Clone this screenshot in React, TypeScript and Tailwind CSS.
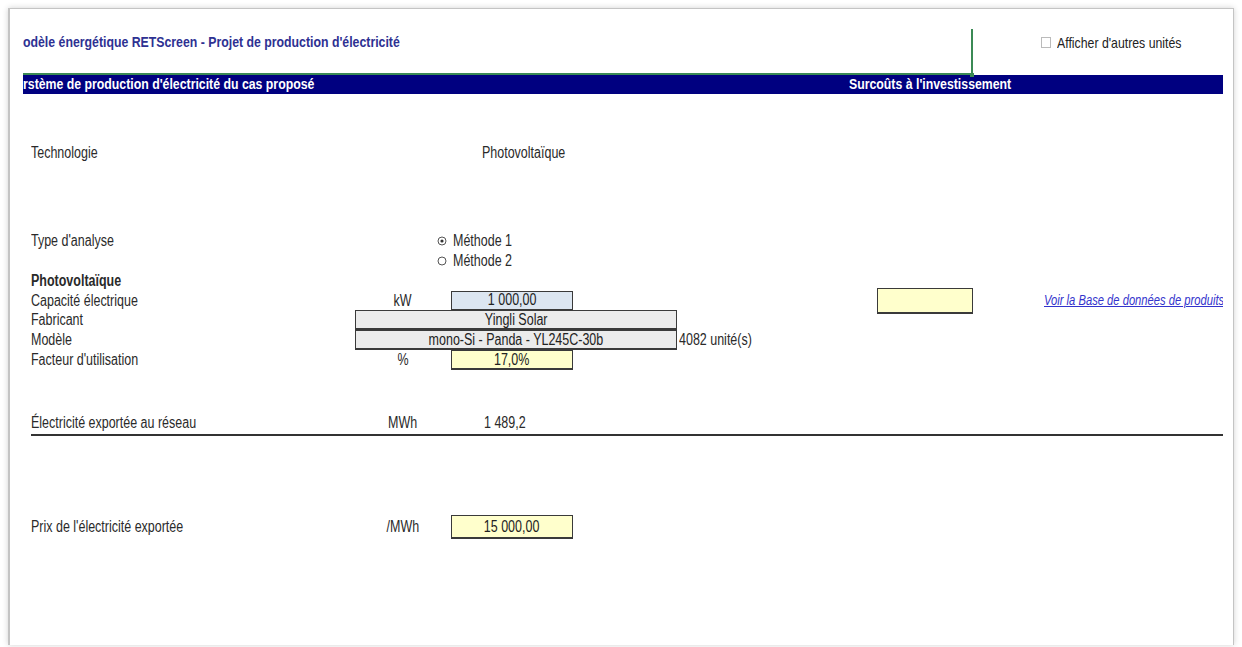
import React from 'react';

const font = { fontFamily: '"Liberation Sans", Arial, sans-serif' };

// Arial Narrow is not available: squeeze Liberation Sans horizontally
const T = ({
  children,
  className = '',
  center,
}: {
  children: React.ReactNode;
  className?: string;
  center?: boolean;
}) => (
  <span
    className={`inline-block whitespace-nowrap ${center ? 'origin-center' : 'origin-left'} ${className || 'scale-x-[0.78]'}`}
  >
    {children}
  </span>
);

const Box = ({ value, className = '' }: { value: string; className?: string }) => (
  <div
    className={`flex h-[20px] items-center justify-center border border-b-2 border-[#3a3a3a] text-[16px] text-[#222] ${className}`}
  >
    <T center>{value}</T>
  </div>
);

const Radio = ({ checked }: { checked?: boolean }) => (
  <svg width="10" height="10" viewBox="0 0 10 10" className="mr-[6px]">
    <circle cx="5" cy="5" r="4" fill="none" stroke="#555" strokeWidth="1" />
    {checked && <circle cx="5" cy="5" r="1.6" fill="#333" />}
  </svg>
);

const Unit = ({ children }: { children: React.ReactNode }) => (
  <span className="w-[96px] text-center">
    <T center>{children}</T>
  </span>
);

export default function App() {
  return (
    <div className="h-[647px] w-[1242px] overflow-hidden bg-white" style={font}>
      <div className="ml-[8px] mt-[8px] h-[637px] w-[1226px] overflow-hidden border-l-2 border-r border-t border-[#c4c4c4] bg-white shadow-[0_0_6px_rgba(0,0,0,0.18)]">
        {/* header */}
        <div className="flex h-[66px]">
          <div className="flex w-[961px] flex-col pl-[13px]">
            <div className="pt-[23px] text-[15px] font-bold leading-[20px] text-[#2e3192]">
              <T className="scale-x-[0.82]">odèle énergétique RETScreen - Projet de production d'électricité</T>
            </div>
            <div className="mt-auto h-[2px] bg-[#3b8a55]" />
          </div>
          <div className="relative mt-[20px] w-[2px] bg-[#3b8a55]">
            <div className="absolute -left-[1px] bottom-[-2px] h-[4px] w-[4px] bg-[#3b8a55]" />
          </div>
          <div className="flex items-start pl-[68px] pt-[26px]">
            <span className="mr-[6px] mt-[2px] inline-block h-[11px] w-[10px] border border-[#bbb] bg-white" />
            <span className="text-[15px] leading-[16px] text-[#222]">
              <T className="scale-x-[0.82]">Afficher d'autres unités</T>
            </span>
          </div>
        </div>

        {/* section bar */}
        <div className="ml-[13px] flex h-[19px] w-[1200px] items-center bg-[#000080] text-[15px] font-bold text-white">
          <span className="w-[826px]">
            <T className="scale-x-[0.82]">rstème de production d'électricité du cas proposé</T>
          </span>
          <T className="scale-x-[0.82]">Surcoûts à l'investissement</T>
        </div>

        <div className="pl-[21px] text-[16px] text-[#2a2a2a]">
          {/* Technologie */}
          <div className="mt-[49px] flex h-[20px] items-center">
            <span className="w-[451px]">
              <T>Technologie</T>
            </span>
            <T>Photovoltaïque</T>
          </div>

          {/* Type d'analyse */}
          <div className="mt-[68px] flex h-[20px] items-center">
            <span className="w-[406px]">
              <T>Type d'analyse</T>
            </span>
            <Radio checked />
            <T>Méthode 1</T>
          </div>
          <div className="flex h-[20px] items-center">
            <span className="w-[406px]" />
            <Radio />
            <T>Méthode 2</T>
          </div>

          {/* Photovoltaïque */}
          <div className="flex h-[20px] items-center font-bold">
            <T>Photovoltaïque</T>
          </div>

          <div className="flex h-[19px] items-center">
            <span className="w-[324px]">
              <T>Capacité électrique</T>
            </span>
            <Unit>kW</Unit>
            <Box value="1 000,00" className="w-[122px] bg-[#dce6f1]" />
            <span className="w-[304px]" />
            <div className="h-[26px] w-[96px] border border-b-2 border-[#3a3a3a] bg-[#ffffcc]" />
            <span className="w-[71px]" />
            <span className="w-[179px] overflow-hidden text-[14px]">
              <a href="#" className="text-[#3333cc]">
                <T className="scale-x-[0.8] italic underline">Voir la Base de données de produits</T>
              </a>
            </span>
          </div>

          <div className="flex h-[20px] items-center">
            <span className="w-[324px]">
              <T>Fabricant</T>
            </span>
            <Box value="Yingli Solar" className="w-[322px] bg-[#ebebeb]" />
          </div>

          <div className="flex h-[20px] items-center">
            <span className="w-[324px]">
              <T>Modèle</T>
            </span>
            <Box value="mono-Si - Panda - YL245C-30b" className="w-[322px] bg-[#ebebeb]" />
            <span className="pl-[2px]">
              <T>4082 unité(s)</T>
            </span>
          </div>

          <div className="flex h-[20px] items-center">
            <span className="w-[324px]">
              <T>Facteur d'utilisation</T>
            </span>
            <Unit>%</Unit>
            <Box value="17,0%" className="w-[122px] bg-[#ffffcc]" />
          </div>

          {/* Électricité exportée */}
          <div className="mr-[10px] mt-[42px] flex h-[24px] items-center border-b-2 border-[#333]">
            <span className="w-[324px]">
              <T>Électricité exportée au réseau</T>
            </span>
            <Unit>MWh</Unit>
            <span className="pl-[33px]">
              <T>1 489,2</T>
            </span>
          </div>

          {/* Prix */}
          <div className="mt-[79px] flex h-[24px] items-center">
            <span className="w-[324px]">
              <T>Prix de l'électricité exportée</T>
            </span>
            <Unit>/MWh</Unit>
            <Box value="15 000,00" className="h-[24px] w-[122px] bg-[#ffffcc]" />
          </div>
        </div>
      </div>
    </div>
  );
}
